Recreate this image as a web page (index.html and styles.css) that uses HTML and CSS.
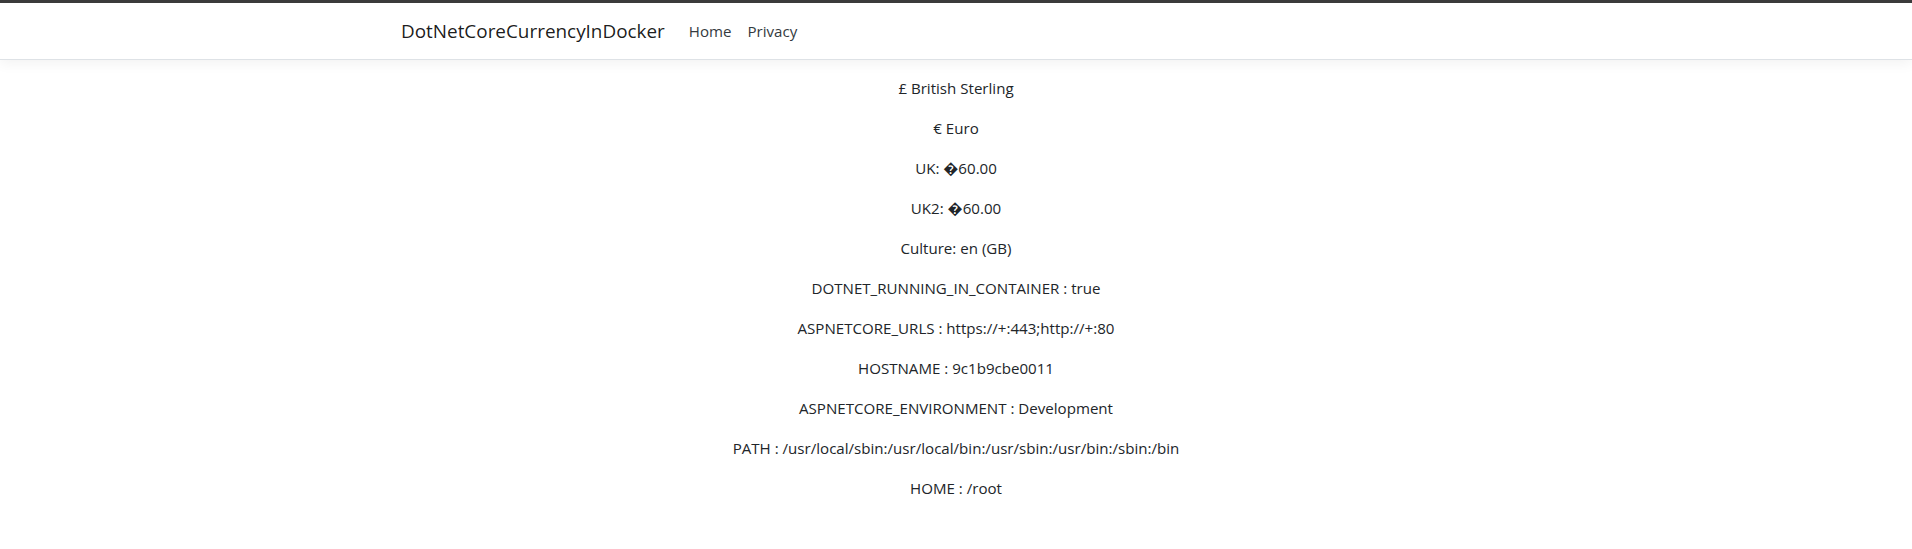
FILE: index.html
```html
<!DOCTYPE html>
<html lang="en">
<head>
<meta charset="utf-8">
<title>DotNetCoreCurrencyInDocker</title>
<link rel="stylesheet" href="styles.css">
</head>
<body>
<div class="topstrip"></div>
<header class="navbar">
  <div class="container nav-inner">
    <a class="brand" href="#">DotNetCoreCurrencyInDocker</a>
    <ul class="nav">
      <li><a class="nav-link" href="#">Home</a></li>
      <li><a class="nav-link" href="#">Privacy</a></li>
    </ul>
  </div>
</header>
<main class="container content">
  <p>£ British Sterling</p>
  <p>€ Euro</p>
  <p>UK: �60.00</p>
  <p>UK2: �60.00</p>
  <p>Culture: en (GB)</p>
  <p>DOTNET_RUNNING_IN_CONTAINER : true</p>
  <p>ASPNETCORE_URLS : https://+:443;http://+:80</p>
  <p>HOSTNAME : 9c1b9cbe0011</p>
  <p>ASPNETCORE_ENVIRONMENT : Development</p>
  <p>PATH : /usr/local/sbin:/usr/local/bin:/usr/sbin:/usr/bin:/sbin:/bin</p>
  <p>HOME : /root</p>
</main>
</body>
</html>
```
FILE: styles.css
```css
* { box-sizing: border-box; }
html, body { margin: 0; padding: 0; }
body {
  font-family: "Open Sans", "Noto Sans", "Liberation Sans", sans-serif;
  font-size: 15.1px;
  line-height: 24px;
  color: #212529;
  background: #fff;
}
.topstrip { height: 3px; background: #3c3c3c; }
.container {
  max-width: 1140px;
  margin: 0 auto;
  padding: 0 15px;
}
.navbar {
  background: #fff;
  border-bottom: 1px solid #dee2e6;
  box-shadow: 0 4px 12px rgba(0,0,0,.05);
  padding: 8px 0;
  margin-bottom: 16px;
}
.nav-inner { display: flex; align-items: center; }
.brand {
  font-size: 18.9px;
  line-height: 30px;
  padding: 5px 0;
  margin-right: 16px;
  color: rgba(0,0,0,.9);
  text-decoration: none;
}
.nav { display: flex; list-style: none; margin: 0; padding: 0; }
.nav-link {
  display: block;
  padding: 8px;
  line-height: 24px;
  color: #343a40;
  text-decoration: none;
}
.content { text-align: center; }
.content p { margin: 0 0 16px; }
```
